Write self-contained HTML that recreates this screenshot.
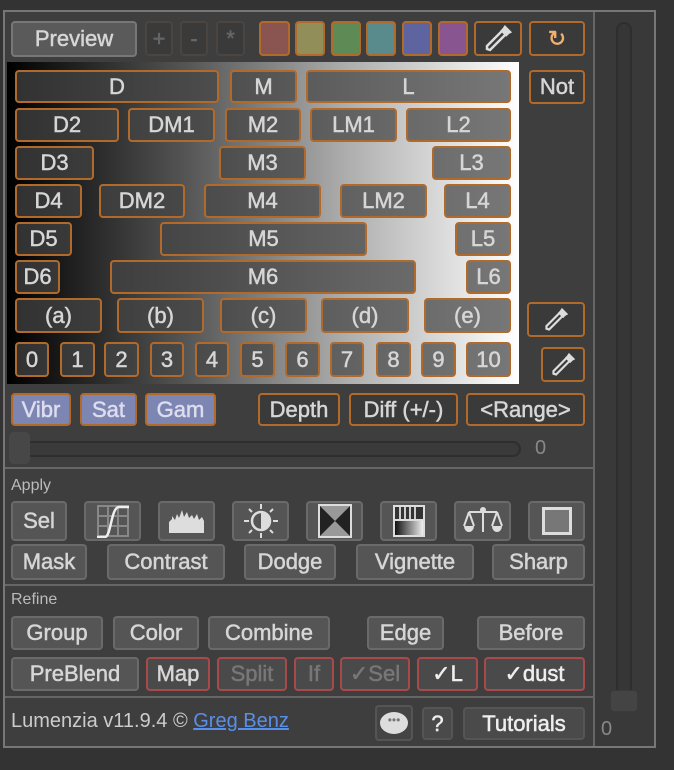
<!DOCTYPE html>
<html><head><style>
body{margin:0;width:674px;height:770px;background:#333;position:relative;overflow:hidden;font-family:"Liberation Sans",sans-serif}
.a{position:absolute;box-sizing:border-box}
.b{position:absolute;box-sizing:border-box;border:2px solid #6a6a6a;border-radius:4px;background:#555;color:#d6d6d6;font-weight:normal;-webkit-text-stroke:0.5px currentColor;font-size:22px;display:flex;align-items:center;justify-content:center;white-space:nowrap}
.o{border-color:#b26a2a;background:rgba(68,68,68,.72)}
.od{border-color:#b26a2a;background:#3a3a3a}
.r{border-color:#a84a4a;background:#4a4a4a}
.v{border-color:#b26a2a;background:#7d86b3;color:#dde}
.lbl{position:absolute;color:#bbb;font-size:16px}
</style></head><body>
<div class="a" style="left:3px;top:10px;width:653px;height:738px;border:2px solid #777;background:#3e3e3e"></div>
<div class="a" style="left:593px;top:12px;width:2px;height:734px;background:#666"></div>
<div class="a" style="left:595px;top:12px;width:59px;height:734px;background:#393939"></div>
<div class="a" style="left:616px;top:22px;width:16px;height:690px;border:2px solid #2e2e2e;border-radius:8px;background:#363636"></div>
<div class="a" style="left:610px;top:690px;width:28px;height:22px;border-radius:4px;background:#444;border:1px solid #3a3a3a"></div>
<div class="lbl" style="left:601px;top:718px;font-size:20px;color:#888">0</div>

<div class="b" style="left:11px;top:21px;width:126px;height:36px;background:#5a5a5a;border-color:#777">Preview</div>
<div class="b" style="left:145px;top:21px;width:28px;height:35px;background:#3a3a3a;border-color:#4a4540;color:#666">+</div>
<div class="b" style="left:180px;top:21px;width:28px;height:35px;background:#3a3a3a;border-color:#4a4540;color:#666">-</div>
<div class="b" style="left:216px;top:21px;width:29px;height:35px;background:#3a3a3a;border-color:#4a4540;color:#666">*</div>
<div class="b o" style="left:259px;top:21px;width:31px;height:35px;background:#8a5450"></div>
<div class="b o" style="left:295px;top:21px;width:30px;height:35px;background:#918e5a"></div>
<div class="b o" style="left:331px;top:21px;width:30px;height:35px;background:#5e8a56"></div>
<div class="b o" style="left:366px;top:21px;width:30px;height:35px;background:#5a8b8c"></div>
<div class="b o" style="left:402px;top:21px;width:30px;height:35px;background:#5e64a0"></div>
<div class="b o" style="left:438px;top:21px;width:30px;height:35px;background:#885590"></div>
<div class="b od" style="left:474px;top:21px;width:48px;height:35px"><svg width="30" height="30" viewBox="0 0 30 30"><path d="M22 3l5 5-4 2-10 10-6 6-3-1 0-3 6-6 10-10z" fill="none" stroke="#ddd" stroke-width="2.5"/><path d="M19 5l6 6" stroke="#ddd" stroke-width="5"/></svg></div>
<div class="b od" style="left:529px;top:21px;width:56px;height:35px;color:#f0b070">&#8635;</div>

<div class="a" style="left:7px;top:62px;width:512px;height:322px;background:linear-gradient(90deg,#000 0%,#555 35%,#aaa 65%,#fff 100%)"></div>
<div class="b o" style="left:15px;top:70px;width:204px;height:33px">D</div>
<div class="b o" style="left:230px;top:70px;width:67px;height:33px">M</div>
<div class="b o" style="left:306px;top:70px;width:205px;height:33px">L</div>
<div class="b od" style="left:529px;top:70px;width:56px;height:34px">Not</div>
<div class="b o" style="left:15px;top:108px;width:104px;height:34px">D2</div>
<div class="b o" style="left:128px;top:108px;width:87px;height:34px">DM1</div>
<div class="b o" style="left:225px;top:108px;width:76px;height:34px">M2</div>
<div class="b o" style="left:310px;top:108px;width:87px;height:34px">LM1</div>
<div class="b o" style="left:406px;top:108px;width:105px;height:34px">L2</div>
<div class="b o" style="left:15px;top:146px;width:79px;height:34px">D3</div>
<div class="b o" style="left:219px;top:146px;width:87px;height:34px">M3</div>
<div class="b o" style="left:432px;top:146px;width:79px;height:34px">L3</div>
<div class="b o" style="left:15px;top:184px;width:67px;height:34px">D4</div>
<div class="b o" style="left:99px;top:184px;width:86px;height:34px">DM2</div>
<div class="b o" style="left:204px;top:184px;width:117px;height:34px">M4</div>
<div class="b o" style="left:340px;top:184px;width:87px;height:34px">LM2</div>
<div class="b o" style="left:444px;top:184px;width:67px;height:34px">L4</div>
<div class="b o" style="left:15px;top:222px;width:57px;height:34px">D5</div>
<div class="b o" style="left:160px;top:222px;width:207px;height:34px">M5</div>
<div class="b o" style="left:455px;top:222px;width:56px;height:34px">L5</div>
<div class="b o" style="left:15px;top:260px;width:45px;height:34px">D6</div>
<div class="b o" style="left:110px;top:260px;width:306px;height:34px">M6</div>
<div class="b o" style="left:466px;top:260px;width:45px;height:34px">L6</div>
<div class="b o" style="left:15px;top:298px;width:87px;height:35px">(a)</div>
<div class="b o" style="left:117px;top:298px;width:87px;height:35px">(b)</div>
<div class="b o" style="left:220px;top:298px;width:87px;height:35px">(c)</div>
<div class="b o" style="left:321px;top:298px;width:88px;height:35px">(d)</div>
<div class="b o" style="left:424px;top:298px;width:87px;height:35px">(e)</div>
<div class="b od" style="left:527px;top:302px;width:58px;height:35px"><svg width="26" height="26" viewBox="0 0 30 30"><path d="M22 3l5 5-4 2-10 10-6 6-3-1 0-3 6-6 10-10z" fill="none" stroke="#ddd" stroke-width="2.5"/><path d="M19 5l6 6" stroke="#ddd" stroke-width="5"/></svg></div>
<div class="b o" style="left:15px;top:342px;width:34px;height:35px">0</div>
<div class="b o" style="left:60px;top:342px;width:35px;height:35px">1</div>
<div class="b o" style="left:104px;top:342px;width:35px;height:35px">2</div>
<div class="b o" style="left:150px;top:342px;width:34px;height:35px">3</div>
<div class="b o" style="left:195px;top:342px;width:34px;height:35px">4</div>
<div class="b o" style="left:240px;top:342px;width:35px;height:35px">5</div>
<div class="b o" style="left:285px;top:342px;width:35px;height:35px">6</div>
<div class="b o" style="left:330px;top:342px;width:34px;height:35px">7</div>
<div class="b o" style="left:376px;top:342px;width:35px;height:35px">8</div>
<div class="b o" style="left:421px;top:342px;width:35px;height:35px">9</div>
<div class="b o" style="left:466px;top:342px;width:45px;height:35px">10</div>
<div class="b od" style="left:541px;top:347px;width:44px;height:35px"><svg width="26" height="26" viewBox="0 0 30 30"><path d="M22 3l5 5-4 2-10 10-6 6-3-1 0-3 6-6 10-10z" fill="none" stroke="#ddd" stroke-width="2.5"/><path d="M19 5l6 6" stroke="#ddd" stroke-width="5"/></svg></div>

<div class="b v" style="left:11px;top:393px;width:60px;height:33px">Vibr</div>
<div class="b v" style="left:80px;top:393px;width:57px;height:33px">Sat</div>
<div class="b v" style="left:145px;top:393px;width:71px;height:33px">Gam</div>
<div class="b od" style="left:258px;top:393px;width:82px;height:33px">Depth</div>
<div class="b od" style="left:349px;top:393px;width:109px;height:33px">Diff (+/-)</div>
<div class="b od" style="left:466px;top:393px;width:119px;height:33px">&lt;Range&gt;</div>
<div class="a" style="left:18px;top:441px;width:503px;height:16px;border:2px solid #2e2e2e;border-radius:8px;background:#3a3a3a"></div>
<div class="a" style="left:9px;top:432px;width:21px;height:32px;border-radius:5px;background:#474747"></div>
<div class="lbl" style="left:535px;top:437px;font-size:20px;color:#888">0</div>

<div class="a" style="left:5px;top:467px;width:588px;height:2px;background:#666"></div>
<div class="lbl" style="left:11px;top:477px">Apply</div>
<div class="b" style="left:11px;top:501px;width:56px;height:40px">Sel</div>
<div class="b" style="left:84px;top:501px;width:57px;height:40px"><svg width="34" height="34" viewBox="0 0 34 34"><path d="M2 2h30v30H2zM2 12h30M2 22h30M12 2v30M22 2v30" stroke="#888" fill="none" stroke-width="2"/><path d="M1 33h8c6 0 6-30 14-30h10" stroke="#eee" fill="none" stroke-width="2.5"/></svg></div>
<div class="b" style="left:158px;top:501px;width:57px;height:40px"><svg width="38" height="24" viewBox="0 0 38 24"><path d="M1 24V13l3-3v-3l3 4 2-6 2 4 3-8 2 7 3-5 2 6 3-3 2 4 3-5 2 6 3-3 2 4v13z" fill="#ddd"/></svg></div>
<div class="b" style="left:232px;top:501px;width:57px;height:40px"><svg width="36" height="36" viewBox="0 0 36 36"><circle cx="18" cy="18" r="9" fill="none" stroke="#ddd" stroke-width="2.5"/><path d="M18 9a9 9 0 0 1 0 18z" fill="#ddd"/><path d="M18 1v5M18 30v5M1 18h5M30 18h5M6 6l3 3M27 27l3 3M6 30l3-3M27 9l3-3" stroke="#ddd" stroke-width="2"/></svg></div>
<div class="b" style="left:306px;top:501px;width:57px;height:40px"><svg width="34" height="34" viewBox="0 0 34 34"><rect x="1" y="1" width="32" height="32" fill="#999" stroke="#ddd" stroke-width="2"/><path d="M2 2L17 17 2 32zM32 2L17 17 32 32z" fill="#222"/></svg></div>
<div class="b" style="left:380px;top:501px;width:57px;height:40px"><svg width="34" height="34" viewBox="0 0 34 34"><defs><linearGradient id="g"><stop offset="0" stop-color="#111"/><stop offset="1" stop-color="#eee"/></linearGradient></defs><rect x="1" y="1" width="32" height="32" fill="#ddd"/><rect x="3" y="3" width="28" height="12" fill="#333"/><path d="M8 3v12M13 3v12M18 3v12M23 3v12" stroke="#ccc" stroke-width="2"/><rect x="3" y="17" width="28" height="14" fill="url(#g)"/></svg></div>
<div class="b" style="left:454px;top:501px;width:57px;height:40px"><svg width="40" height="34" viewBox="0 0 40 34"><path d="M20 4v24M6 8h28M6 8l-5 14M6 8l5 14M34 8l-5 14M34 8l5 14" stroke="#ddd" stroke-width="2" fill="none"/><circle cx="20" cy="6" r="3" fill="#ddd"/><path d="M1 22h10a5 6 0 0 1-10 0zM29 22h10a5 6 0 0 1-10 0z" fill="#ddd"/></svg></div>
<div class="b" style="left:528px;top:501px;width:57px;height:40px"><div style="width:30px;height:28px;border:3px solid #ddd;background:#777;box-sizing:border-box"></div></div>
<div class="b" style="left:11px;top:544px;width:76px;height:36px">Mask</div>
<div class="b" style="left:107px;top:544px;width:118px;height:36px">Contrast</div>
<div class="b" style="left:244px;top:544px;width:92px;height:36px">Dodge</div>
<div class="b" style="left:356px;top:544px;width:118px;height:36px">Vignette</div>
<div class="b" style="left:492px;top:544px;width:93px;height:36px">Sharp</div>

<div class="a" style="left:5px;top:584px;width:588px;height:2px;background:#666"></div>
<div class="lbl" style="left:11px;top:591px">Refine</div>
<div class="b" style="left:11px;top:616px;width:92px;height:34px">Group</div>
<div class="b" style="left:113px;top:616px;width:86px;height:34px">Color</div>
<div class="b" style="left:208px;top:616px;width:122px;height:34px">Combine</div>
<div class="b" style="left:367px;top:616px;width:77px;height:34px">Edge</div>
<div class="b" style="left:477px;top:616px;width:108px;height:34px">Before</div>
<div class="b" style="left:11px;top:657px;width:128px;height:34px">PreBlend</div>
<div class="b r" style="left:146px;top:657px;width:64px;height:34px">Map</div>
<div class="b r" style="left:217px;top:657px;width:70px;height:34px;color:#777">Split</div>
<div class="b r" style="left:294px;top:657px;width:40px;height:34px;color:#777">If</div>
<div class="b r" style="left:340px;top:657px;width:70px;height:34px;color:#777">✓Sel</div>
<div class="b r" style="left:417px;top:657px;width:61px;height:34px;color:#eee">✓L</div>
<div class="b r" style="left:484px;top:657px;width:101px;height:34px;color:#eee">✓dust</div>

<div class="a" style="left:5px;top:696px;width:588px;height:2px;background:#666"></div>
<div class="lbl" style="left:11px;top:710px;font-size:20px;color:#ccc">Lumenzia v11.9.4 © <span style="color:#5a8fe8;text-decoration:underline">Greg Benz</span></div>
<div class="b" style="left:375px;top:705px;width:38px;height:36px;background:#444;border-color:#555"><div style="width:28px;height:22px;border-radius:50%;background:#ddd;color:#777;font-size:12px;text-align:center;line-height:16px;-webkit-text-stroke:0">•••</div></div>
<div class="b" style="left:422px;top:707px;width:31px;height:33px;background:#4a4a4a;border-color:#555;color:#eee">?</div>
<div class="b" style="left:463px;top:707px;width:122px;height:33px;background:#4a4a4a;border-color:#555;color:#eee">Tutorials</div>
</body></html>
